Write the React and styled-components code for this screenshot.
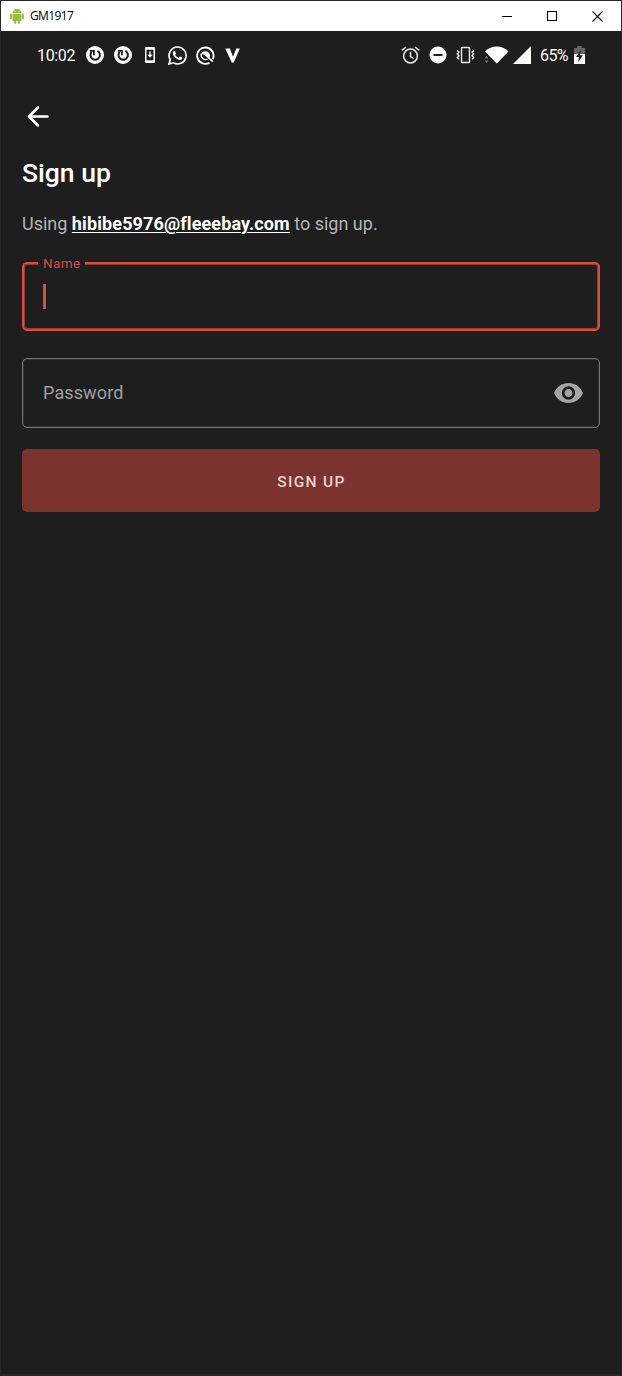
import React from "react";
import styled, { createGlobalStyle } from "styled-components";

const GlobalStyle = createGlobalStyle`
  * { box-sizing: border-box; }
  body { margin: 0; background: #1e1e1e; }
`;

const Window = styled.div`
  height: 1376px;
  display: flex;
  flex-direction: column;
  background: #1e1e1e;
  border: solid #29262b;
  border-width: 1px 1px 2px 1px;
  font-family: Roboto, sans-serif;
  color: #fff;
`;

const TitleBar = styled.header`
  height: 30px;
  flex: none;
  display: flex;
  align-items: center;
  padding: 0 0.5px 0 9px;
  background: #fff;
  color: #000;
`;

const WindowTitle = styled.span`
  flex: 1;
  margin-left: 6px;
  font: 12px/16px "Open Sans", sans-serif;
  letter-spacing: -0.6px;
`;

const WindowButton = styled.button`
  width: 45.5px;
  height: 30px;
  padding: 0;
  border: 0;
  background: none;
  display: flex;
  align-items: center;
  justify-content: center;
`;

const StatusBar = styled.div`
  height: 48px;
  flex: none;
  display: flex;
  align-items: center;
  justify-content: space-between;
  padding: 0 36px;
`;

const StatusGroup = styled.div`
  display: flex;
  align-items: center;
`;

const StatusText = styled.span`
  width: ${(p) => p.$width}px;
  padding-top: 1px;
  font-size: 16px;
  line-height: 20px;
  letter-spacing: ${(p) => p.$spacing}px;
  white-space: nowrap;
`;

const StatusSlot = styled.span`
  width: ${(p) => p.$width || 27.6}px;
  display: flex;
  justify-content: center;
`;

const Page = styled.main`
  display: flex;
  flex-direction: column;
  padding: 22px 21px 0;
`;

const BackButton = styled.button`
  width: 32px;
  height: 32px;
  padding: 0;
  border: 0;
  background: none;
  display: flex;
`;

const Heading = styled.h1`
  margin: 24px 0 0;
  font-size: 26.5px;
  line-height: 32px;
  font-weight: 500;
`;

const Intro = styled.p`
  margin: 23px 0 0;
  font-size: 18px;
  line-height: 24px;
  color: #b4b4b4;
`;

const Email = styled.strong`
  font-weight: 700;
  letter-spacing: 0.12px;
  color: #fff;
  text-decoration: underline;
  text-decoration-thickness: 1px;
  text-underline-offset: 2px;
`;

const Field = styled.div`
  position: relative;
  height: ${(p) => (p.$active ? 69 : 70)}px;
  margin-top: ${(p) => (p.$active ? 26 : 27)}px;
  display: flex;
  align-items: center;
  justify-content: space-between;
  padding: 0 ${(p) => (p.$active ? 18 : 16)}px 0 ${(p) => (p.$active ? 18 : 20)}px;
  border: ${(p) => (p.$active ? "2px solid #dc4c3e" : "1px solid #757575")};
  box-shadow: inset 0 0 0 ${(p) => (p.$active ? "1px #98392f" : "0.5px #454545")};
  border-radius: 5px;
`;

const FloatingLabel = styled.label`
  position: absolute;
  top: -9px;
  left: 14px;
  padding: 0 4px 0 5px;
  background: #1e1e1e;
  color: #dc4c3e;
  font-size: 13.5px;
  line-height: 16px;
  letter-spacing: 0.4px;
`;

const Caret = styled.span`
  width: 3px;
  height: 25px;
  margin-left: 1px;
  background: #dc4c3e;
`;

const Placeholder = styled.span`
  padding-bottom: 1px;
  font-size: 18px;
  letter-spacing: 0.12px;
  color: #a0a0a0;
`;

const SubmitButton = styled.button`
  height: 63px;
  margin-top: 21px;
  padding: 2px 0 0 1px;
  border: 0;
  border-radius: 5px;
  background: #7c332d;
  color: #e5d6d5;
  font: 500 15.5px Roboto, sans-serif;
  letter-spacing: 1.3px;
`;

const Android = () => (
  <svg width="14" height="16" viewBox="0 0 14 16" fill="#97c03d">
    <path d="M2.5 5a4.5 4 0 0 1 9 0zM2.5 5.7h9v6.4a.9.9 0 0 1-.9.9H3.4a.9.9 0 0 1-.9-.9z" />
    <path d="M4 .3 5 2M10 .3 9 2" stroke="#97c03d" strokeWidth=".6" />
    <rect y="5.5" width="1.9" height="6" rx=".95" />
    <rect x="12.1" y="5.5" width="1.9" height="6" rx=".95" />
    <rect x="4.2" y="11" width="2" height="5" rx="1" />
    <rect x="7.8" y="11" width="2" height="5" rx="1" />
    <circle cx="5" cy="3.3" r=".45" fill="#fff" />
    <circle cx="9" cy="3.3" r=".45" fill="#fff" />
  </svg>
);

const Refresh = () => (
  <svg width="18" height="18" viewBox="0 0 18 18">
    <circle cx="9" cy="9" r="9" fill="#fff" />
    <path d="M11.4 4.9A4.7 4.7 0 1 1 5.6 6" fill="none" stroke="#1e1e1e" strokeWidth="2" />
    <path d="M3.8 4.9h4.100v4.300" fill="none" stroke="#1e1e1e" strokeWidth="1.8" />
  </svg>
);

const PhoneUpdate = () => (
  <svg width="10" height="16" viewBox="0 0 10 16">
    <rect width="10" height="16" rx="1.3" fill="#fff" />
    <path d="M1.5 2.7h7v10.6h-7z" fill="#1e1e1e" />
    <path d="M4.3 4.5h1.4v3.3h2L5 10.8 2.3 7.8h2z" fill="#fff" />
  </svg>
);

const WhatsApp = () => (
  <svg width="19" height="19" viewBox="0 0 24 24" fill="#fff">
    <path d="M17.47 14.38c-.3-.15-1.76-.87-2.03-.97-.27-.1-.47-.15-.67.15-.2.3-.77.97-.94 1.16-.17.2-.35.22-.65.08-.3-.15-1.25-.46-2.39-1.48-.88-.79-1.48-1.76-1.65-2.06-.17-.3-.02-.46.13-.6.13-.14.3-.35.45-.53.15-.17.2-.3.3-.5.1-.2.05-.37-.03-.52-.07-.15-.67-1.61-.91-2.2-.24-.58-.49-.5-.67-.51h-.57c-.2 0-.52.07-.79.37-.27.3-1.04 1.02-1.04 2.48s1.06 2.87 1.21 3.07c.15.2 2.1 3.2 5.08 4.49.71.3 1.26.49 1.69.62.71.23 1.36.2 1.87.12.57-.09 1.76-.72 2.01-1.41.25-.7.25-1.29.17-1.41-.07-.13-.27-.2-.57-.35z" />
    <path d="M12 1.3A10.7 10.7 0 0 0 2.8 17.4L1.3 22.7l5.4-1.5A10.7 10.7 0 1 0 12 1.3z" fill="none" stroke="#fff" strokeWidth="2.1" />
  </svg>
);

const Swirl = () => (
  <svg width="19" height="19" viewBox="0 0 19 19" fill="none" stroke="#fff">
    <path d="M13.5 16.7A8.2 8.2 0 1 1 16.8 13" strokeWidth="1.9" />
    <path d="M5 8.3A4.7 4.7 0 0 1 13.9 8.5c.3 1.3.1 2.3-.4 3.3L9.600 8.700z" fill="#fff" stroke="none" />
    <path d="M5.200 7.800a4.500 4.500 0 0 0 6.500 5.200" strokeWidth="1.3" />
    <path d="m8.500 8 8.300 7.700" strokeWidth="1.6" />
  </svg>
);

const VMark = () => (
  <svg width="15" height="15" viewBox="0 0 15 15" fill="#fff">
    <path d="M.3.5h4.600L8 8.700 11.200.5h3.600L8.800 14.500H6.700z" />
  </svg>
);

const Alarm = () => (
  <svg width="19" height="18" viewBox="0 0 19 18" fill="none" stroke="#e8e8e8" strokeWidth="1.5">
    <circle cx="9.5" cy="10" r="6.9" />
    <path d="M9.5 5.8v4.7l3 2M.8 4.3 5 1M18.2 4.3 14 1" />
  </svg>
);

const DoNotDisturb = () => (
  <svg width="18" height="18" viewBox="0 0 18 18">
    <circle cx="9" cy="9" r="8.5" fill="#fff" />
    <path d="M4.5 9h9" stroke="#1e1e1e" strokeWidth="2" />
  </svg>
);

const Vibrate = () => (
  <svg width="19" height="18" viewBox="0 0 19 18" fill="none" stroke="#e8e8e8" strokeWidth="1.4">
    <rect x="5.5" y="1.5" width="8" height="15" rx=".8" />
    <path d="m1 4.5 2 1.5-1.7 2L3 9.7 1.3 11.5 3 13.3M18 4.5 16 6l1.7 2L16 9.7l1.7 1.8-1.7 1.8" />
  </svg>
);

const Wifi = () => (
  <svg width="25" height="18" viewBox="0 0 25 18">
    <path d="M1 5.5C7.500-1.300 18-1.300 24.500 5.500L12.700 17.500z" fill="#fff" />
    <path d="M.5 12.500h4L2.500 10zM.5 14.500h4l-2 2.500z" fill="#777" />
  </svg>
);

const Signal = () => (
  <svg width="18" height="18" viewBox="0 0 18 18"><path d="M18 0v18H0z" fill="#fff" /></svg>
);

const Battery = () => (
  <svg width="11" height="18" viewBox="0 0 11 18">
    <path d="M3.3 0h4.4v2H11v6H0V2h3.3z" fill="#656565" />
    <path d="M0 8h11v10H0z" fill="#fff" />
    <path d="M6.8 4 2 11h3l-.8 5L9 9.3H6z" fill="#1e1e1e" />
  </svg>
);

const Eye = () => (
  <svg width="29" height="20" viewBox="1 4.5 22 15" preserveAspectRatio="none" fill="#a5a5a5">
    <path d="M12 4.5C7 4.5 2.73 7.61 1 12c1.73 4.39 6 7.5 11 7.5s9.27-3.11 11-7.5c-1.73-4.39-6-7.5-11-7.5zM12 17c-2.76 0-5-2.24-5-5s2.24-5 5-5 5 2.24 5 5-2.24 5-5 5zm0-8c-1.66 0-3 1.34-3 3s1.34 3 3 3 3-1.34 3-3-1.34-3-3-3z" />
  </svg>
);

export default function App() {
  return (
    <>
      <GlobalStyle />
      <Window>
        <TitleBar>
          <Android />
          <WindowTitle>GM1917</WindowTitle>
          <WindowButton aria-label="Minimize">
            <svg width="10" height="11" shapeRendering="crispEdges"><path d="M0 5.5h10" stroke="#000" /></svg>
          </WindowButton>
          <WindowButton aria-label="Maximize">
            <svg width="10" height="10" shapeRendering="crispEdges"><path d="M.5.5h9v9h-9z" fill="none" stroke="#000" /></svg>
          </WindowButton>
          <WindowButton aria-label="Close">
            <svg width="11" height="11"><path d="m.5.5 10 10M10.5.5l-10 10" stroke="#000" strokeWidth="1.1" /></svg>
          </WindowButton>
        </TitleBar>
        <StatusBar>
          <StatusGroup>
            <StatusText $width={44.2} $spacing={-0.35}>10:02</StatusText>
            <StatusSlot><Refresh /></StatusSlot>
            <StatusSlot><Refresh /></StatusSlot>
            <StatusSlot><PhoneUpdate /></StatusSlot>
            <StatusSlot><WhatsApp /></StatusSlot>
            <StatusSlot><Swirl /></StatusSlot>
            <StatusSlot><VMark /></StatusSlot>
          </StatusGroup>
          <StatusGroup>
            <StatusSlot><Alarm /></StatusSlot>
            <StatusSlot><DoNotDisturb /></StatusSlot>
            <StatusSlot><Vibrate /></StatusSlot>
            <StatusSlot $width={34}><Wifi /></StatusSlot>
            <StatusSlot $width={18}><Signal /></StatusSlot>
            <StatusSlot $width={9} />
            <StatusText $width={34} $spacing={-0.6}>65%</StatusText>
            <Battery />
          </StatusGroup>
        </StatusBar>
        <Page>
          <BackButton aria-label="Back">
            <svg width="32" height="32" fill="none" stroke="#fff" strokeWidth="2.5" strokeLinecap="round" strokeLinejoin="round">
              <path d="M25.5 15.500H7.500M16 6.500l-9 9 9 9" />
            </svg>
          </BackButton>
          <Heading>Sign up</Heading>
          <Intro>Using <Email>hibibe5976@fleeebay.com</Email> to sign up.</Intro>
          <Field $active>
            <FloatingLabel>Name</FloatingLabel>
            <Caret />
          </Field>
          <Field>
            <Placeholder>Password</Placeholder>
            <Eye />
          </Field>
          <SubmitButton>SIGN UP</SubmitButton>
        </Page>
      </Window>
    </>
  );
}
